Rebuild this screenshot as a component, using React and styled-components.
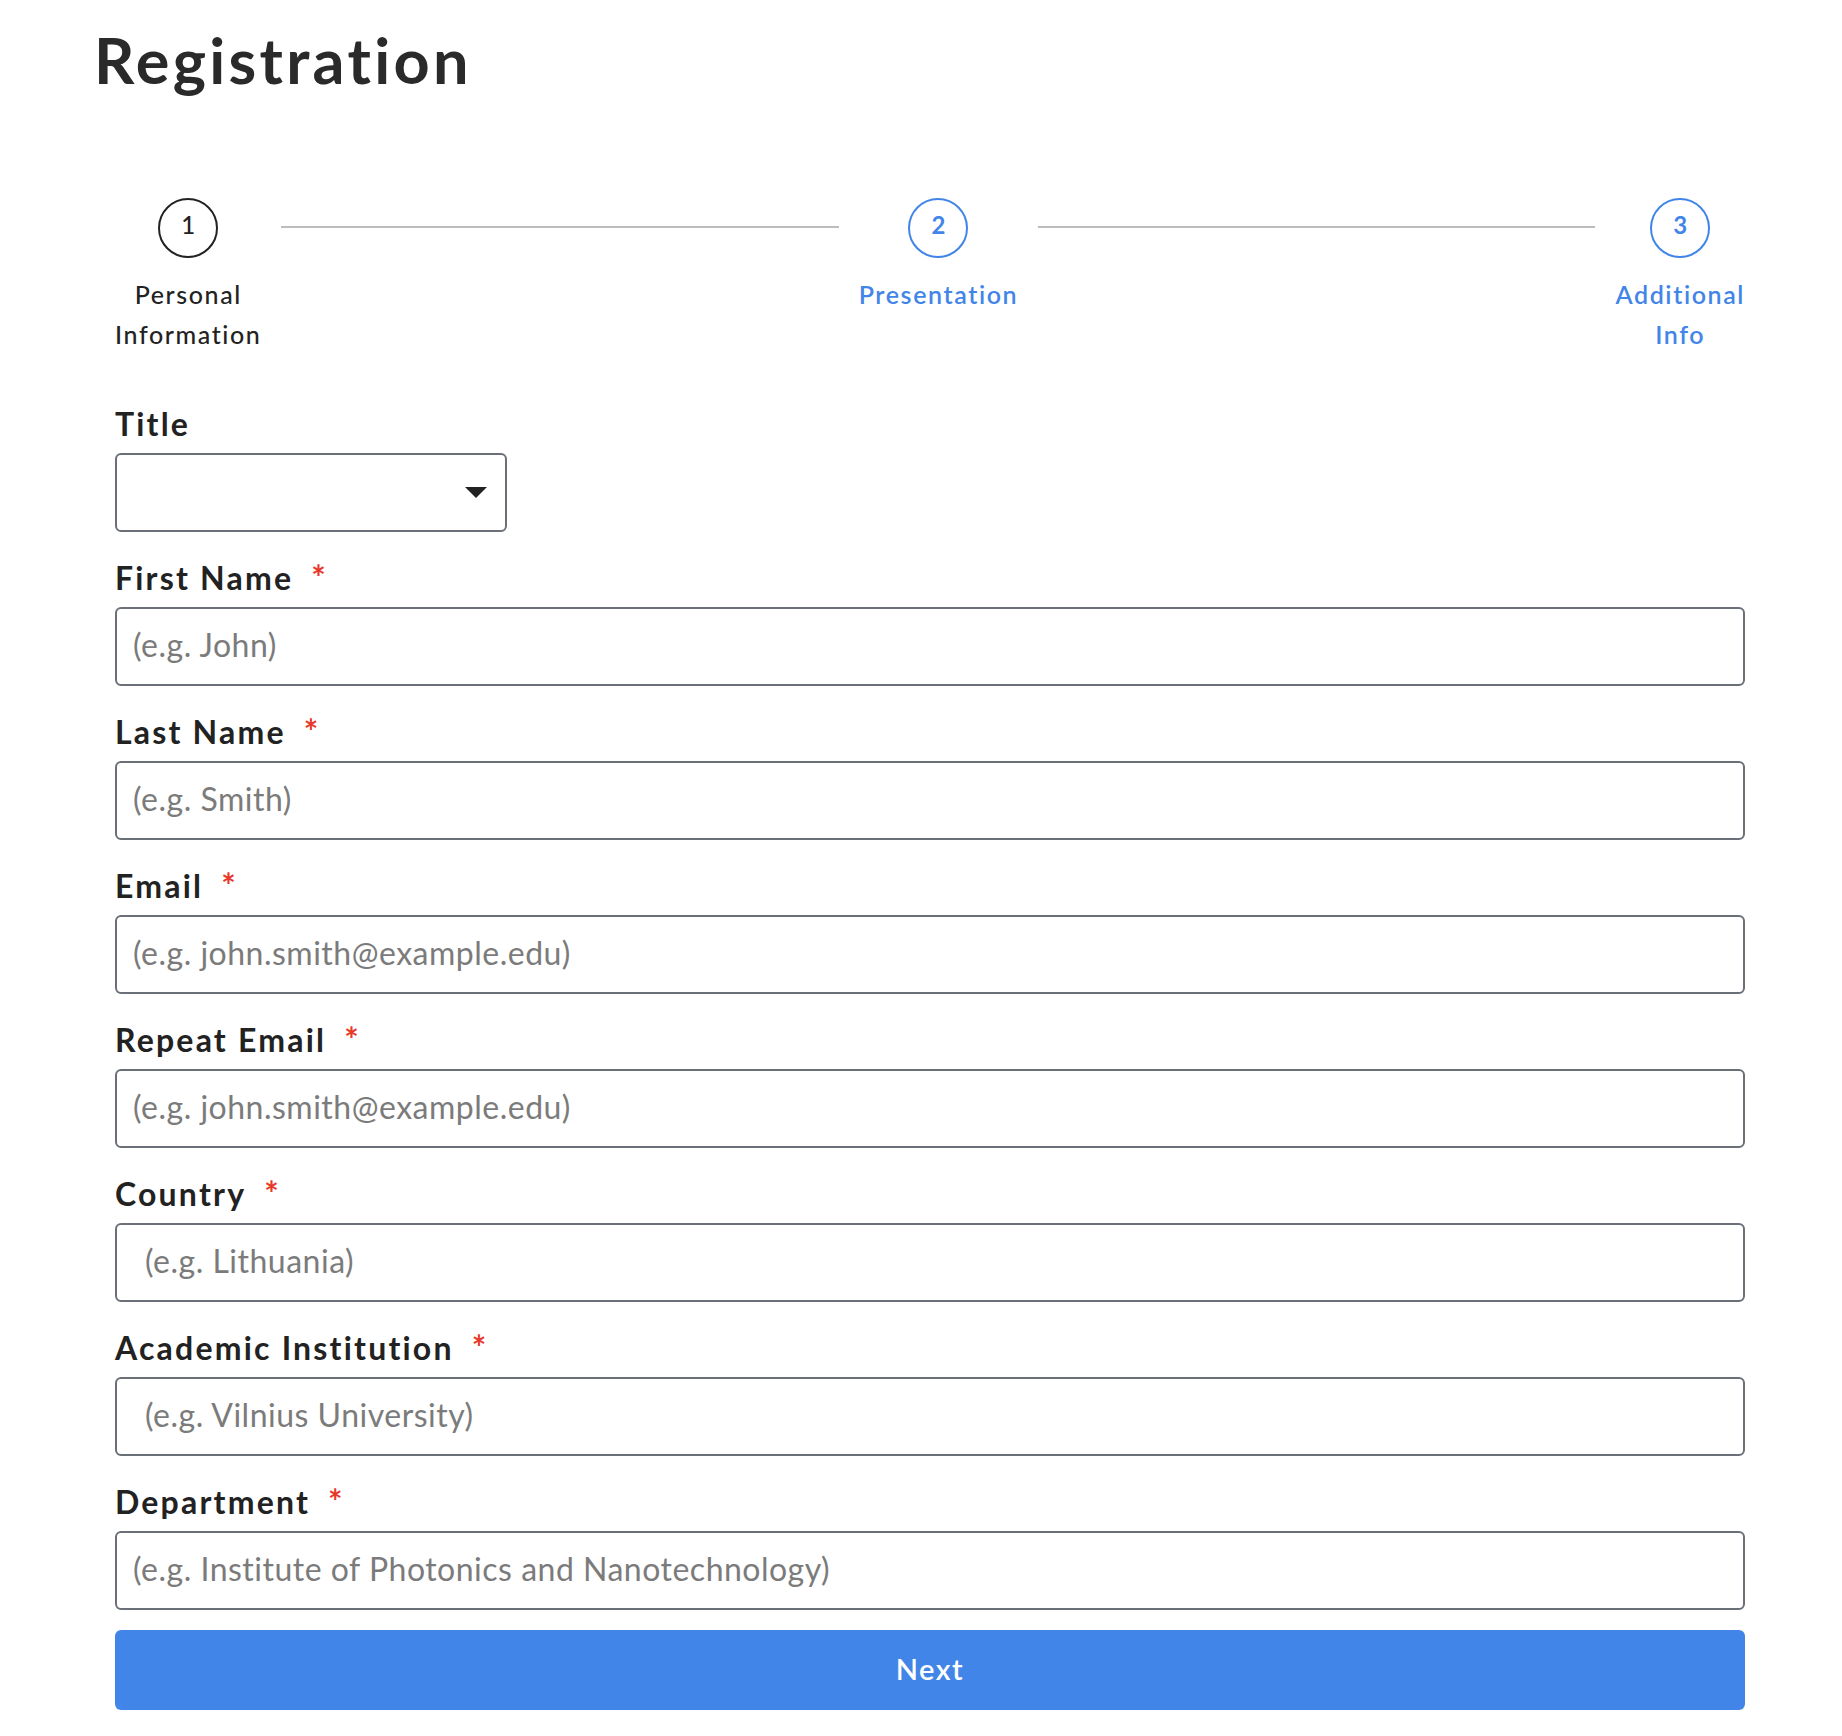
import React from 'react';
import styled, { createGlobalStyle } from 'styled-components';

const GlobalStyle = createGlobalStyle`
  body {
    margin: 0;
    background: #ffffff;
    font-family: 'Lato', 'Liberation Sans', sans-serif;
    color: #222222;
  }
`;

const Page = styled.div`
  padding: 28px 97px 0 0;
`;

const Heading = styled.h1`
  margin: 0;
  padding-left: 94px;
  font-size: 63px;
  line-height: 63px;
  font-weight: 700;
  letter-spacing: 3.3px;
  color: #2a2a2a;
`;

const Content = styled.div`
  margin-left: 115px;
`;

const Stepper = styled.div`
  display: flex;
  align-items: flex-start;
  margin-top: 107px;
`;

const Step = styled.div`
  display: flex;
  flex-direction: column;
  align-items: center;
  color: ${(p) => (p.$active ? '#222222' : '#4285e8')};
`;

const Circle = styled.div`
  box-sizing: border-box;
  width: 60px;
  height: 60px;
  padding-bottom: 6px;
  border-radius: 50%;
  border: 2px solid currentColor;
  display: flex;
  align-items: center;
  justify-content: center;
  font-size: 24px;
  line-height: 1;
  font-weight: ${(p) => (p.$active ? 500 : 700)};
`;

const StepLabel = styled.div`
  margin-top: 16px;
  font-size: 25px;
  line-height: 40px;
  letter-spacing: 1.6px;
  text-align: center;
  font-weight: ${(p) => (p.$active ? 500 : 600)};
`;

const Connector = styled.div`
  flex: 1;
  height: 2px;
  margin: 28px 20px 0;
  background: #bdbdc0;
`;

const Form = styled.form`
  margin-top: 50px;
  display: flex;
  flex-direction: column;
`;

const Field = styled.div`
  display: flex;
  flex-direction: column;
  margin-bottom: 26px;
`;

const Label = styled.label`
  font-size: 32px;
  line-height: 40px;
  font-weight: 700;
  letter-spacing: 2.2px;
  color: #222222;
  margin-bottom: 9px;
`;

const Required = styled.span`
  color: #e8382a;
  margin-left: 18px;
  font-size: 34px;
  font-weight: 700;
  line-height: 0;
  letter-spacing: 0;
`;

const SelectBox = styled.div`
  box-sizing: border-box;
  width: 392px;
  height: 79px;
  border: 2px solid #6b6f78;
  border-radius: 6px;
  display: flex;
  align-items: center;
  justify-content: flex-end;
  padding-right: 18px;
`;

const Input = styled.input`
  box-sizing: border-box;
  width: 100%;
  height: 79px;
  border: 2px solid #6b6f78;
  border-radius: 6px;
  padding: 0 0 5px ${(p) => p.$indent}px;
  font-family: 'Lato', 'Liberation Sans', sans-serif;
  font-size: 32px;
  letter-spacing: 0.5px;
  color: #222222;
  outline: none;
  &::placeholder {
    color: #7b7b7b;
  }
`;

const NextButton = styled.button`
  height: 80px;
  margin-top: -6px;
  padding-bottom: 5px;
  border: none;
  border-radius: 6px;
  background: #4285e8;
  color: #ffffff;
  font-family: 'Lato', 'Liberation Sans', sans-serif;
  font-size: 29px;
  font-weight: 600;
  letter-spacing: 1.5px;
`;

const fields = [
  { label: 'First Name', placeholder: '(e.g. John)', indent: 16 },
  { label: 'Last Name', placeholder: '(e.g. Smith)', indent: 16 },
  { label: 'Email', placeholder: '(e.g. john.smith@example.edu)', indent: 16 },
  { label: 'Repeat Email', placeholder: '(e.g. john.smith@example.edu)', indent: 16 },
  { label: 'Country', placeholder: '(e.g. Lithuania)', indent: 28 },
  { label: 'Academic Institution', placeholder: '(e.g. Vilnius University)', indent: 28 },
  { label: 'Department', placeholder: '(e.g. Institute of Photonics and Nanotechnology)', indent: 16 },
];

const App = () => {
  return (
    <Page>
      <GlobalStyle />
      <Heading>Registration</Heading>
      <Content>
        <Stepper>
          <Step $active>
            <Circle $active>1</Circle>
            <StepLabel $active>
              Personal
              <br />
              Information
            </StepLabel>
          </Step>
          <Connector />
          <Step>
            <Circle>2</Circle>
            <StepLabel>Presentation</StepLabel>
          </Step>
          <Connector />
          <Step>
            <Circle>3</Circle>
            <StepLabel>
              Additional
              <br />
              Info
            </StepLabel>
          </Step>
        </Stepper>

        <Form onSubmit={(e) => e.preventDefault()}>
          <Field>
            <Label>Title</Label>
            <SelectBox>
              <svg width="22" height="12" viewBox="0 0 22 12">
                <path d="M0 0 H22 L11 11 Z" fill="#222222" />
              </svg>
            </SelectBox>
          </Field>
          {fields.map((f) => (
            <Field key={f.label}>
              <Label>
                {f.label}
                <Required>*</Required>
              </Label>
              <Input placeholder={f.placeholder} $indent={f.indent} />
            </Field>
          ))}
          <NextButton type="submit">Next</NextButton>
        </Form>
      </Content>
    </Page>
  );
};

export default App;
